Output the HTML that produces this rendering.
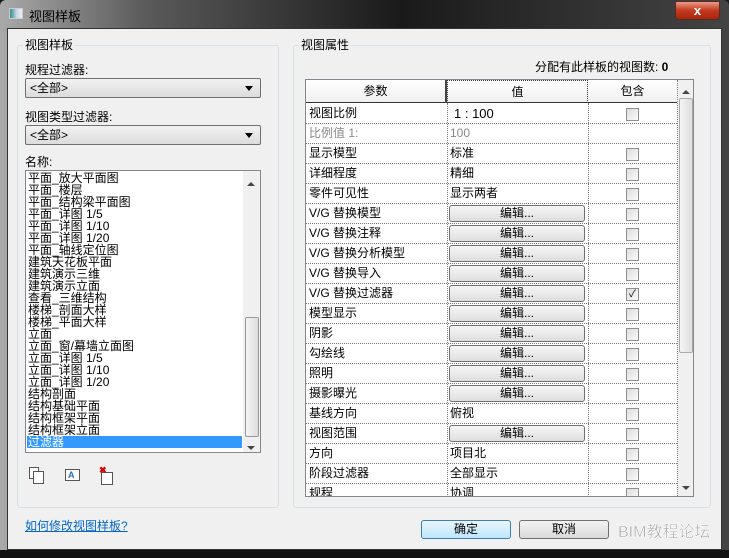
<!DOCTYPE html>
<html><head><meta charset="utf-8"><style>
*{margin:0;padding:0;box-sizing:border-box}
body{width:729px;height:558px;overflow:hidden;background:#1a1a1a;font-family:"Liberation Sans","Noto Sans CJK SC","WenQuanYi Zen Hei",sans-serif;font-size:12px;color:#000;position:relative}
.a{position:absolute}
#frame{left:0;top:0;width:729px;height:558px;border-radius:6px 6px 0 0;background:linear-gradient(90deg,#a9a9a9 0%,#5a5a5a 20%,#1a1a1a 55%,#444 100%)}
#client{left:7px;top:28px;width:715px;height:522px;background:#f0f0f0;border:1px solid #333}
.grp{border:1px solid #d5dfe5;border-radius:3px}
.lbl{background:#f0f0f0;padding:0 2px;line-height:14px}
.dd{height:20px;border:1px solid #707070;border-radius:2px;background:linear-gradient(#f2f2f2,#dcdcdc);padding-left:4px;line-height:18px}
.dd:after{content:"";position:absolute;right:7px;top:7px;border:4px solid transparent;border-top:5px solid #000}
.lst{background:#fff;border:1px solid #828790}
.it{position:absolute;left:2px;line-height:12px;height:12px;font-size:12px;white-space:nowrap}
.sb{background:#f0f0f0}
.row{position:absolute;left:0;width:371px;height:20px;border-bottom:1px dotted #777}
.c{position:absolute;top:0;height:20px;line-height:19px;padding-left:3px;white-space:nowrap}
.btn{position:absolute;left:143px;top:1px;width:136px;height:17px;border:1px solid #707070;border-radius:3px;background:linear-gradient(#f6f6f6,#dedede);text-align:center;line-height:15px}
.chk{position:absolute;left:320px;top:4px;width:13px;height:13px;border:1px solid #8f8f8f;background:linear-gradient(135deg,#ddd,#fafafa)}
.b2{height:19px;border:1px solid #707070;border-radius:3px;background:linear-gradient(#f3f3f3,#dadada);text-align:center;line-height:17px}
</style></head><body>
<div class="a" id="frame"></div>
<div class="a" style="left:9px;top:8px;width:14px;height:11px;background:linear-gradient(90deg,#3a8a8a,#cde 60%,#eee);border:1px solid #ccc"></div>
<div class="a" style="left:29px;top:6px;font-size:13px;color:#000">视图样板</div>
<div class="a" style="left:675px;top:1px;width:45px;height:19px;border:1px solid #5a2a20;border-radius:0 0 4px 4px;background:linear-gradient(#e89a86,#c2391e 50%,#a8260f);color:#fff;text-align:center;font-weight:bold;font-size:13px;line-height:17px">x</div>
<div class="a" id="client"></div>

<div class="a grp" style="left:17px;top:45px;width:262px;height:463px"></div>
<div class="a lbl" style="left:23px;top:38px">视图样板</div>
<div class="a" style="left:25px;top:61px">规程过滤器:</div>
<div class="a dd" style="left:25px;top:78px;width:236px">&lt;全部&gt;</div>
<div class="a" style="left:25px;top:108px">视图类型过滤器:</div>
<div class="a dd" style="left:25px;top:125px;width:236px">&lt;全部&gt;</div>
<div class="a" style="left:25px;top:153px">名称:</div>
<div class="a lst" style="left:25px;top:170px;width:236px;height:283px">
<div class="a sb" style="left:217px;top:0;width:17px;height:281px"></div>
<div class="a" style="left:219px;top:146px;width:14px;height:120px;border:1px solid #999;border-radius:2px;background:linear-gradient(90deg,#f5f5f5,#ddd)"></div>
<div class="a" style="left:221px;top:7px;border:4px solid transparent;border-bottom:4px solid #444"></div>
<div class="a" style="left:221px;top:275px;border:4px solid transparent;border-top:4px solid #444"></div>
<div class="a" style="left:1px;top:265px;width:215px;height:12px;background:#3399ff"></div>
<div class="it" style="top:1px">平面_放大平面图</div>
<div class="it" style="top:13px">平面_楼层</div>
<div class="it" style="top:25px">平面_结构梁平面图</div>
<div class="it" style="top:37px">平面_详图 1/5</div>
<div class="it" style="top:49px">平面_详图 1/10</div>
<div class="it" style="top:61px">平面_详图 1/20</div>
<div class="it" style="top:73px">平面_轴线定位图</div>
<div class="it" style="top:85px">建筑天花板平面</div>
<div class="it" style="top:97px">建筑演示三维</div>
<div class="it" style="top:109px">建筑演示立面</div>
<div class="it" style="top:121px">查看_三维结构</div>
<div class="it" style="top:133px">楼梯_剖面大样</div>
<div class="it" style="top:145px">楼梯_平面大样</div>
<div class="it" style="top:157px">立面</div>
<div class="it" style="top:169px">立面_窗/幕墙立面图</div>
<div class="it" style="top:181px">立面_详图 1/5</div>
<div class="it" style="top:193px">立面_详图 1/10</div>
<div class="it" style="top:205px">立面_详图 1/20</div>
<div class="it" style="top:217px">结构剖面</div>
<div class="it" style="top:229px">结构基础平面</div>
<div class="it" style="top:241px">结构框架平面</div>
<div class="it" style="top:253px">结构框架立面</div>
<div class="it" style="top:265px;color:#fff">过滤器</div>
</div>
<div class="a" style="left:29px;top:467px;width:10px;height:12px;border:1px solid #555;background:#fff"></div>
<div class="a" style="left:33px;top:471px;width:11px;height:13px;border:1px solid #555;background:#fff"></div>
<div class="a" style="left:65px;top:469px;width:15px;height:12px;border:1px solid #555;background:#fff;font-size:9px;font-weight:bold;color:#2a6cc0;line-height:10px;padding-left:2px">A</div>
<div class="a" style="left:101px;top:472px;width:12px;height:13px;border:1px solid #555;background:#fff"></div>
<div class="a" style="left:99px;top:465px;color:#d00;font-size:9px;font-weight:bold">✖</div>
<div class="a" style="left:25px;top:517px;color:#0066cc;text-decoration:underline">如何修改视图样板?</div>

<div class="a grp" style="left:293px;top:45px;width:418px;height:463px"></div>
<div class="a lbl" style="left:299px;top:38px">视图属性</div>
<div class="a" style="left:535px;top:58px">分配有此样板的视图数: <b>0</b></div>
<div class="a" style="left:305px;top:79px;width:389px;height:418px;border:1px solid #828790;background:#fff;overflow:hidden">
<div class="a" style="left:0;top:0;width:371px;height:23px;background:linear-gradient(#fff,#f0f0f0);border-bottom:1px solid #333"></div>
<div class="a" style="left:0;top:0;width:141px;height:23px;text-align:center;line-height:23px;border-right:2px solid #444">参数</div>
<div class="a" style="left:141px;top:0;width:141px;height:23px;text-align:center;line-height:23px;border:1px dotted #333">值</div>
<div class="a" style="left:282px;top:0;width:89px;height:23px;text-align:center;line-height:23px">包含</div>
<div class="a" style="left:141px;top:23px;width:1px;height:400px;border-left:1px dotted #777"></div>
<div class="a" style="left:282px;top:23px;width:1px;height:400px;border-left:1px dotted #777"></div>
<div class="a" style="left:371px;top:0;width:1px;height:418px;border-left:1px dotted #777"></div>
<div class="a sb" style="left:372px;top:0;width:16px;height:416px"></div>
<div class="a" style="left:373px;top:18px;width:14px;height:255px;border:1px solid #aaa;border-radius:2px;background:linear-gradient(90deg,#f5f5f5,#ddd)"></div>
<div class="a" style="left:376px;top:6px;border:4px solid transparent;border-bottom:4px solid #444"></div>
<div class="a" style="left:376px;top:406px;border:4px solid transparent;border-top:4px solid #444"></div>
<div style="position:absolute;left:0;top:24px">
<div class="row" style="top:0"><div class="c">视图比例</div><div class="c" style="left:145px;font-size:13px">1 : 100</div><div class="chk"></div></div>
<div class="row" style="top:20px;color:#888"><div class="c">比例值 1:</div><div class="c" style="left:141px">100</div></div>
<div class="row" style="top:40px"><div class="c">显示模型</div><div class="c" style="left:141px">标准</div><div class="chk"></div></div>
<div class="row" style="top:60px"><div class="c">详细程度</div><div class="c" style="left:141px">精细</div><div class="chk"></div></div>
<div class="row" style="top:80px"><div class="c">零件可见性</div><div class="c" style="left:141px">显示两者</div><div class="chk"></div></div>
<div class="row" style="top:100px"><div class="c">V/G 替换模型</div><div class="btn">编辑...</div><div class="chk"></div></div>
<div class="row" style="top:120px"><div class="c">V/G 替换注释</div><div class="btn">编辑...</div><div class="chk"></div></div>
<div class="row" style="top:140px"><div class="c">V/G 替换分析模型</div><div class="btn">编辑...</div><div class="chk"></div></div>
<div class="row" style="top:160px"><div class="c">V/G 替换导入</div><div class="btn">编辑...</div><div class="chk"></div></div>
<div class="row" style="top:180px"><div class="c">V/G 替换过滤器</div><div class="btn">编辑...</div><div class="chk" style="font-size:10px;line-height:11px;text-align:center">✓</div></div>
<div class="row" style="top:200px"><div class="c">模型显示</div><div class="btn">编辑...</div><div class="chk"></div></div>
<div class="row" style="top:220px"><div class="c">阴影</div><div class="btn">编辑...</div><div class="chk"></div></div>
<div class="row" style="top:240px"><div class="c">勾绘线</div><div class="btn">编辑...</div><div class="chk"></div></div>
<div class="row" style="top:260px"><div class="c">照明</div><div class="btn">编辑...</div><div class="chk"></div></div>
<div class="row" style="top:280px"><div class="c">摄影曝光</div><div class="btn">编辑...</div><div class="chk"></div></div>
<div class="row" style="top:300px"><div class="c">基线方向</div><div class="c" style="left:141px">俯视</div><div class="chk"></div></div>
<div class="row" style="top:320px"><div class="c">视图范围</div><div class="btn">编辑...</div><div class="chk"></div></div>
<div class="row" style="top:340px"><div class="c">方向</div><div class="c" style="left:141px">项目北</div><div class="chk"></div></div>
<div class="row" style="top:360px"><div class="c">阶段过滤器</div><div class="c" style="left:141px">全部显示</div><div class="chk"></div></div>
<div class="row" style="top:380px"><div class="c">规程</div><div class="c" style="left:141px">协调</div><div class="chk"></div></div>
</div>
</div>

<div class="a b2" style="left:421px;top:520px;width:90px;border-color:#3c7fb1;background:linear-gradient(#eaf6fd,#bee6fd)">确定</div>
<div class="a b2" style="left:519px;top:520px;width:90px">取消</div>
<div class="a" style="left:618px;top:518px;width:100px;height:20px;font-size:16px;color:#999;-webkit-text-stroke:0.5px #fff">BIM教程论坛</div>
<div class="a" style="left:0;top:550px;width:729px;height:8px;background:#111"></div>
</body></html>
